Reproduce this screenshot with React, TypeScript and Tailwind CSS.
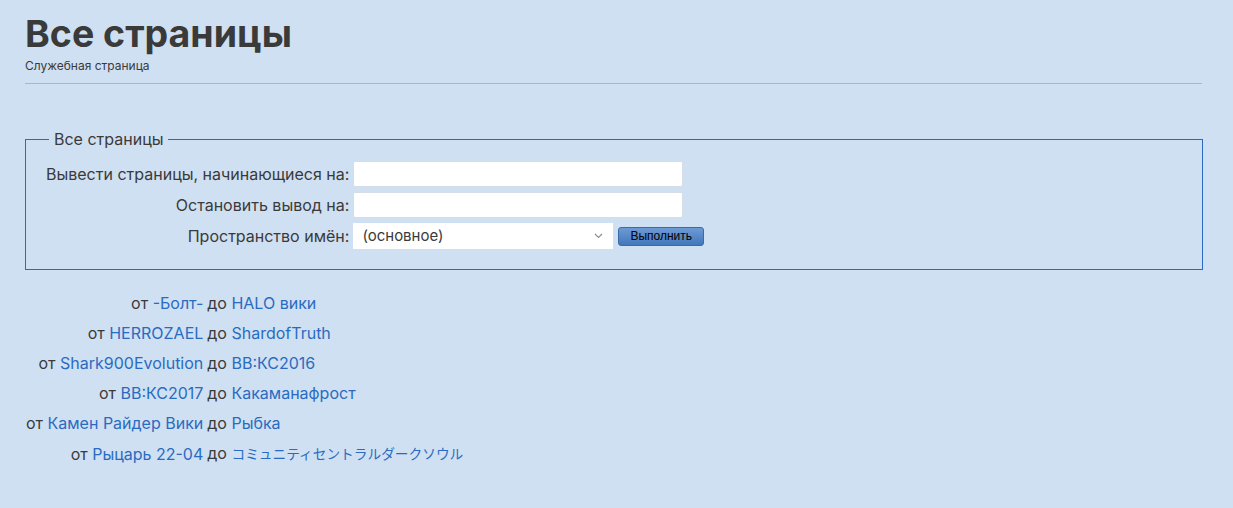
import React from "react";

const rows = [
  { from: "-Болт-", to: "HALO вики" },
  { from: "HERROZAEL", to: "ShardofTruth" },
  { from: "Shark900Evolution", to: "BB:КС2016" },
  { from: "BB:КС2017", to: "Какаманафрост" },
  { from: "Камен Райдер Вики", to: "Рыбка" },
  { from: "Рыцарь 22-04", to: "コミュニティセントラルダークソウル" },
];

export default function App() {
  return (
    <div
      className="min-h-[508px] bg-[#cfe0f2] text-[#3a3a3a] px-[25px] pt-[11px]"
      style={{ fontFamily: 'Inter, "Noto Sans CJK JP", sans-serif' }}
    >
      <h1 className="text-[37.5px] font-bold leading-[46px] text-[#3a3a3a]">Все страницы</h1>
      <div className="text-[12px] leading-[14px] mt-[2px]">Служебная страница</div>
      <div className="w-[1177px] h-px bg-[#a8b6c6] mt-[10px]" />

      <fieldset className="w-[1178px] border border-[#2a6bc1] mt-[45px] pl-[20px] pb-[15px]">
        <legend className="ml-[3px] px-[5px] text-[16px] leading-[20px]">Все страницы</legend>
        <table className="mt-[7px] border-separate border-spacing-y-[5px] border-spacing-x-0">
          <tbody className="text-[16px]">
            <tr>
              <td className="text-right pr-[4px]">Вывести страницы, начинающиеся на:</td>
              <td>
                <input className="block w-[330px] h-[26px] bg-white border border-[#d6dde6] rounded-[2px]" />
              </td>
            </tr>
            <tr>
              <td className="text-right pr-[4px]">Остановить вывод на:</td>
              <td>
                <input className="block w-[330px] h-[26px] bg-white border border-[#d6dde6] rounded-[2px]" />
              </td>
            </tr>
            <tr>
              <td className="text-right pr-[4px]">Пространство имён:</td>
              <td>
                <div className="flex items-center gap-[5px]">
                  <div className="w-[260px] h-[26px] bg-white flex items-center justify-between pl-[9px] pr-[10px]">
                    <span className="text-[15px]">(основное)</span>
                    <svg width="9" height="6" viewBox="0 0 9 6" fill="none">
                      <path d="M1 1l3.5 3.5L8 1" stroke="#8a8f96" strokeWidth="1.2" />
                    </svg>
                  </div>
                  <button
                    className="h-[19px] px-[11px] rounded-[3px] border border-[#3a6aa8] bg-gradient-to-b from-[#6d9ad4] to-[#4277bc] text-[12px] leading-[16px] text-black"
                    style={{ fontFamily: '"Liberation Sans", Arial, sans-serif' }}
                  >
                    Выполнить
                  </button>
                </div>
              </td>
            </tr>
          </tbody>
        </table>
      </fieldset>

      <table className="mt-[18px] text-[16px] leading-[30px] ml-[1px]">
        <tbody>
          {rows.map((r, i) => (
            <tr key={r.from}>
              <td className="text-right pr-[4px]">
                от <span className="text-[#2a6bc1]">{r.from}</span>
              </td>
              <td>
                до{" "}
                <span className={i === 5 ? "text-[#2a6bc1] text-[13.7px]" : "text-[#2a6bc1]"}>{r.to}</span>
              </td>
            </tr>
          ))}
        </tbody>
      </table>
    </div>
  );
}
